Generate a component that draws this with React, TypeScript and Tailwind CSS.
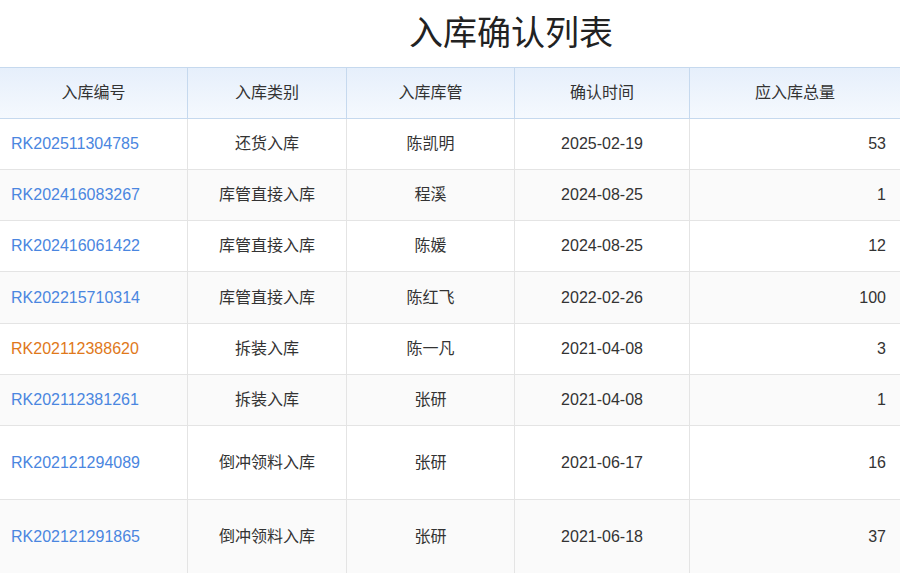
export default function App() {
  const rows = [
    ["RK202511304785", "还货入库", "陈凯明", "2025-02-19", "53", 51],
    ["RK202416083267", "库管直接入库", "程溪", "2024-08-25", "1", 51],
    ["RK202416061422", "库管直接入库", "陈媛", "2024-08-25", "12", 51],
    ["RK202215710314", "库管直接入库", "陈红飞", "2022-02-26", "100", 52],
    ["RK202112388620", "拆装入库", "陈一凡", "2021-04-08", "3", 51],
    ["RK202112381261", "拆装入库", "张研", "2021-04-08", "1", 51],
    ["RK202121294089", "倒冲领料入库", "张研", "2021-06-17", "16", 74],
    ["RK202121291865", "倒冲领料入库", "张研", "2021-06-18", "37", 74],
  ] as const;
  const cols = "grid grid-cols-[188px_159px_168px_175px_210px]";
  return (
    <div className="w-[900px] h-[573px] overflow-hidden bg-white text-[16px] text-[#333]" style={{ fontFamily: "Arial, 'Liberation Sans', 'Noto Sans CJK SC', sans-serif" }}>
      <div className="h-[67px] flex items-center justify-center pl-[122px] text-[34px] text-[#222]">入库确认列表</div>
      <div className={`${cols} h-[52px] bg-gradient-to-b from-[#e6effb] to-[#f5f9fe] border-y border-[#c6d9ee] text-[#333]`}>
        {["入库编号", "入库类别", "入库库管", "确认时间", "应入库总量"].map((h, i) => (
          <div key={h} className={`flex items-center justify-center ${i < 4 ? "border-r border-[#c6d9ee]" : ""}`}>{h}</div>
        ))}
      </div>
      {rows.map((r, idx) => (
        <div key={r[0]} className={`${cols} border-b border-[#e4e4e4] ${idx % 2 ? "bg-[#fafafa]" : "bg-white"}`} style={{ height: r[5] }}>
          <div className={`flex items-center pl-[11px] border-r border-[#e4e4e4] ${idx === 4 ? "text-[#e0781a]" : "text-[#4a86e0]"}`}>{r[0]}</div>
          <div className="flex items-center justify-center border-r border-[#e4e4e4]">{r[1]}</div>
          <div className="flex items-center justify-center border-r border-[#e4e4e4]">{r[2]}</div>
          <div className="flex items-center justify-center border-r border-[#e4e4e4]">{r[3]}</div>
          <div className="flex items-center justify-end pr-[14px]">{r[4]}</div>
        </div>
      ))}
    </div>
  );
}
